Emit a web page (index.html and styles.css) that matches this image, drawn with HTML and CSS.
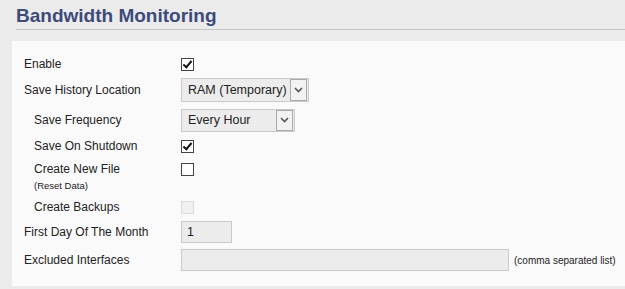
FILE: index.html
```html
<!DOCTYPE html>
<html lang="en">
<head>
    <meta charset="UTF-8">
    <title>Bandwidth Monitoring</title>
    <link rel="stylesheet" href="styles.css">
</head>
<body>
    <div class="header">
        <h1>Bandwidth Monitoring</h1>
    </div>
    <div class="panel">
        <div class="row r-enable">
            <label class="label">Enable</label>
            <span class="check checked"></span>
        </div>
        <div class="row r-location">
            <label class="label">Save History Location</label>
            <div class="select sel-location">
                <span class="select-text">RAM (Temporary)</span>
                <span class="select-arrow">
                    <svg width="9" height="6" viewBox="0 0 9 6"><path d="M1 1 L4.5 4.5 L8 1" fill="none" stroke="#555" stroke-width="1.6"/></svg>
                </span>
            </div>
        </div>
        <div class="row r-freq">
            <label class="label sub">Save Frequency</label>
            <div class="select sel-freq">
                <span class="select-text">Every Hour</span>
                <span class="select-arrow">
                    <svg width="9" height="6" viewBox="0 0 9 6"><path d="M1 1 L4.5 4.5 L8 1" fill="none" stroke="#555" stroke-width="1.6"/></svg>
                </span>
            </div>
        </div>
        <div class="row r-shutdown">
            <label class="label sub">Save On Shutdown</label>
            <span class="check checked"></span>
        </div>
        <div class="row r-newfile">
            <div class="label sub">
                <div class="line">Create New File</div>
                <div class="small">(Reset Data)</div>
            </div>
            <span class="check"></span>
        </div>
        <div class="row r-backups">
            <label class="label sub">Create Backups</label>
            <span class="check disabled"></span>
        </div>
        <div class="row r-firstday">
            <label class="label">First Day Of The Month</label>
            <div class="text-input day-input">1</div>
        </div>
        <div class="row r-excluded">
            <label class="label">Excluded Interfaces</label>
            <div class="text-input iface-input"></div>
            <span class="hint">(comma separated list)</span>
        </div>
    </div>
</body>
</html>
```

FILE: styles.css
```css
body {
    margin: 0;
    background-color: #ebebeb;
    font-family: "Liberation Sans", Arial, sans-serif;
    font-size: 12px;
    color: #222;
    white-space: nowrap;
}
.header {
    padding: 4px 0 0 16px;
}
h1 {
    margin: 0;
    font-size: 19px;
    font-weight: bold;
    color: #3d4a7c;
    line-height: 24px;
    padding-bottom: 1px;
    border-bottom: 1px solid #c6c6c6;
}
.panel {
    margin: 11px 0 0 12px;
    background-color: #fafafa;
    padding: 14px 0 15px 12px;
}
.row {
    display: flex;
    align-items: center;
    margin-top: 5px;
}
.row:first-child {
    margin-top: 0;
}
.label {
    width: 157px;
    flex-shrink: 0;
    line-height: 18px;
}
.label.sub {
    width: 147px;
    padding-left: 10px;
}
.r-enable, .r-shutdown, .r-backups { height: 18px; }
.r-location { height: 24px; }
.r-freq { height: 24px; margin-top: 6px; }
.r-newfile { height: 33px; align-items: flex-start; }
.r-newfile .check { margin-top: 3px; }
.r-firstday { height: 22px; }
.r-excluded { height: 22px; margin-top: 6px; }

.small {
    font-size: 9.5px;
    line-height: 16px;
}
.check {
    box-sizing: border-box;
    flex-shrink: 0;
    width: 13px;
    height: 13px;
    border: 1px solid #444;
    background-color: #fff;
    position: relative;
}
.check.checked::after {
    content: "";
    position: absolute;
    left: 3px;
    top: 0px;
    width: 3px;
    height: 7px;
    border: solid #111;
    border-width: 0 2px 2px 0;
    transform: rotate(40deg);
}
.check.disabled {
    border-color: #dcdcdc;
    background-color: #f0f0f0;
}
.select {
    box-sizing: border-box;
    flex-shrink: 0;
    display: flex;
    align-items: center;
    height: 24px;
    background-color: #ececec;
    border: 1px solid #c9c9c9;
    font-size: 12.5px;
    color: #222;
}
.sel-location { width: 128px; }
.sel-freq { width: 114px; height: 23px; }
.select-text {
    flex: 1;
    padding-left: 6px;
}
.select-arrow {
    box-sizing: border-box;
    width: 17px;
    height: 100%;
    display: flex;
    align-items: center;
    justify-content: center;
    border: 1px solid #aaa;
    background-color: #f2f2f2;
    margin-right: 1px;
}
.text-input {
    box-sizing: border-box;
    flex-shrink: 0;
    height: 22px;
    background-color: #ececec;
    border: 1px solid #c9c9c9;
    padding-left: 5px;
    line-height: 20px;
    font-size: 12.5px;
}
.day-input { width: 51px; }
.iface-input { width: 328px; }
.hint {
    margin-left: 5px;
    font-size: 10px;
}
```
